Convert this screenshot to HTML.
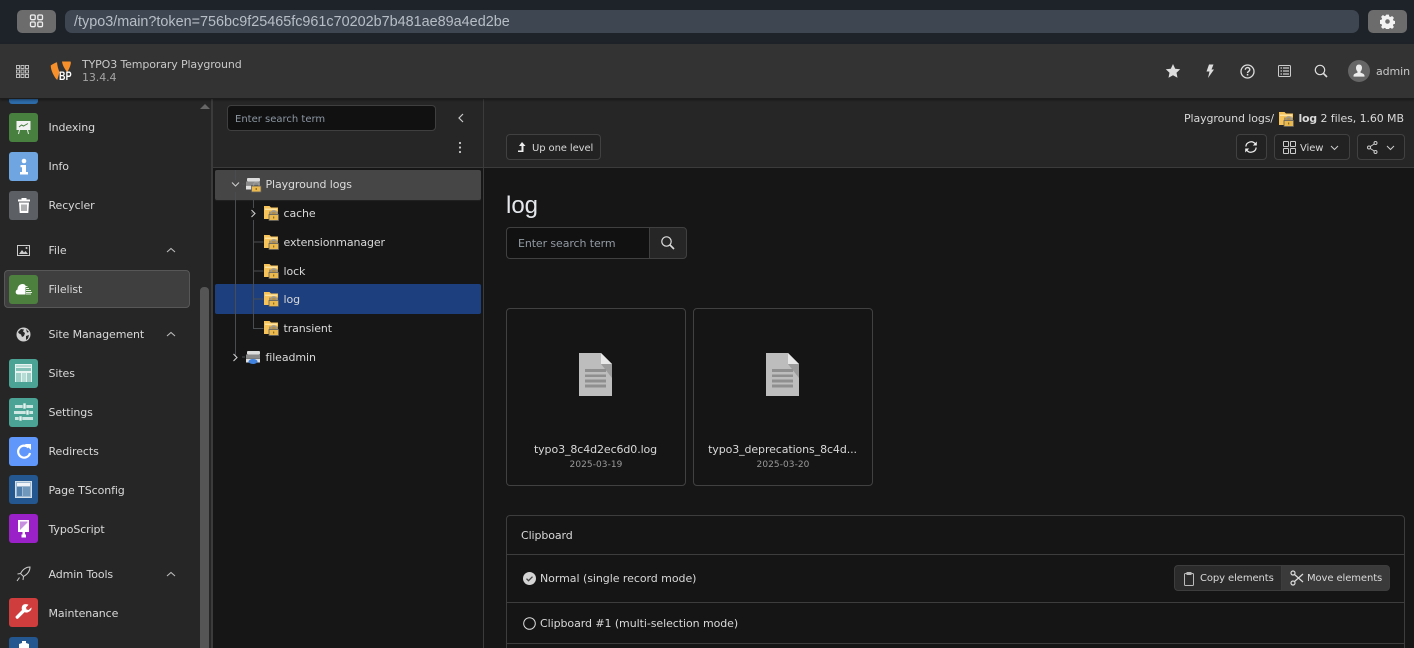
<!DOCTYPE html>
<html><head><meta charset="utf-8"><style>
*{box-sizing:border-box}
html,body{margin:0;padding:0;width:1414px;height:648px;overflow:hidden;background:#161616}
body{font-family:"DejaVu Sans",sans-serif;font-size:11px;color:#d9d9d9;position:relative}
.a{position:absolute}
.t{position:absolute;white-space:nowrap;line-height:14px;margin-top:1px;letter-spacing:-.1px}
svg{position:absolute;display:block}
.ic{position:absolute;left:9px;width:29px;height:29px;border-radius:3px}
.btn{position:absolute;border:1px solid #414141;border-radius:4px;height:26px;background:#222}
.s{left:48.500px}
.b{font-size:10px;margin-top:2px}
</style></head><body>
<!-- Browser bar -->
<div class="a" style="left:0;top:0;width:1414px;height:44px;background:#1e2329"></div>
<div class="a" style="left:17px;top:10px;width:39px;height:23px;background:#6c6c6c;border-radius:5px"></div>
<svg style="left:29px;top:14px" width="15" height="14" fill="none" stroke="#eee" stroke-width="1.300"><rect x="1.500" y="1" width="4.700" height="4.700" rx="1.200"/><rect x="8.800" y="1" width="4.700" height="4.700" rx="1.200"/><rect x="1.500" y="8" width="4.700" height="4.700" rx="1.200"/><rect x="8.800" y="8" width="4.700" height="4.700" rx="1.200"/></svg>
<div class="a" style="left:65px;top:10px;width:1294px;height:23px;background:#3e4651;border-radius:7px"></div>
<div class="t" style="left:74px;top:14px;margin:0;letter-spacing:0;font:14.400px/16px 'Liberation Sans',sans-serif;color:#b8bec6">/typo3/main?token=756bc9f25465fc961c70202b7b481ae89a4ed2be</div>
<div class="a" style="left:1368px;top:10px;width:39px;height:23px;background:#6c6c6c;border-radius:5px"></div>
<svg style="left:1380px;top:14px" width="15" height="15" viewBox="0 0 15 15"><path fill="#f2f2f2" fill-rule="evenodd" d="M6 0h3l.4 2 1.300.6 1.800-1.100 2 2-1.100 1.800.6 1.300 2 .4v3l-2 .4-.6 1.300 1.100 1.800-2 2-1.800-1.100-1.300.6-.4 2H6l-.4-2-1.300-.6-1.800 1.100-2-2 1.100-1.800-.6-1.300-2-.4V6l2-.4.6-1.300L.5 2.500l2-2 1.800 1.100L5.600 1z M7.500 5a2.500 2.500 0 1 0 0 5 2.500 2.500 0 0 0 0-5z" transform="translate(.6 .6) scale(.92)"/></svg>
<!-- Header -->
<div class="a" style="left:0;top:44px;width:1414px;height:55px;background:#333;border-bottom:1px solid #1c1c1c;box-shadow:0 1px 2px rgba(0,0,0,.4);z-index:3"></div>
<div style="position:absolute;left:0;top:0;z-index:4">
<svg style="left:16px;top:65px" width="13" height="13" fill="none" stroke="#bbb" stroke-width="1"><rect x=".5" y=".5" width="3" height="3"/><rect x="5" y=".5" width="3" height="3"/><rect x="9.500" y=".5" width="3" height="3"/><rect x=".5" y="5" width="3" height="3"/><rect x="5" y="5" width="3" height="3"/><rect x="9.500" y="5" width="3" height="3"/><rect x=".5" y="9.500" width="3" height="3"/><rect x="5" y="9.500" width="3" height="3"/><rect x="9.500" y="9.500" width="3" height="3"/></svg>
<svg style="left:50px;top:60px" width="22" height="24" viewBox="0 0 22 24"><path fill="#f7902a" d="M.7 5.500C2.500 4 5 2.800 7 2.200c.3 3.500 1.300 7 2.500 10-.6 2-1.300 5-2.300 7.800C4 17 .7 10 .7 5.500zM12 1.500h8.500c.6 1 .4 2-.2 4-.5 1.800-1.500 4-3 6.500C14.500 9 12.500 5 12 1.500z"/></svg>
<div class="t" style="left:59px;top:72px;margin:0;font:bold 11.500px/11px 'Liberation Sans',sans-serif;color:#fff;letter-spacing:.2px;transform:scaleX(.78);transform-origin:0 0">BP</div>
<div class="t" style="left:82px;top:57px;color:#c8c8c8;letter-spacing:-.13px">TYPO3 Temporary Playground</div>
<div class="t" style="left:82px;top:70px;color:#a5a5a5">13.4.4</div>
<svg style="left:1165px;top:63px" width="16" height="16" viewBox="0 0 16 16"><path fill="#ddd" d="M8 1l2.200 4.700 5 .6-3.700 3.500 1 5L8 12.300 3.500 14.800l1-5L.8 6.300l5-.6z"/></svg>
<svg style="left:1205px;top:64px" width="10" height="15" viewBox="0 0 10 15"><path fill="#ddd" d="M4 .5h4.500L6.500 5.500H9L3 14l1.500-6.500H1.500z"/></svg>
<svg style="left:1240px;top:64px" width="15" height="15" viewBox="0 0 15 15"><circle cx="7.500" cy="7.500" r="6.500" fill="none" stroke="#ddd" stroke-width="1.300"/><path fill="none" stroke="#ddd" stroke-width="1.400" d="M5.300 5.800c0-3 4.500-3 4.500-.2 0 1.700-2.300 1.700-2.300 3.500"/><rect x="6.800" y="10" width="1.500" height="1.500" fill="#ddd"/></svg>
<svg style="left:1278px;top:65px" width="13" height="12" viewBox="0 0 13 12"><rect x=".5" y=".5" width="12" height="11" rx="1" fill="none" stroke="#ccc"/><path stroke="#ccc" stroke-width="1.200" d="M2.500 3h1.500M5 3h6M2.500 6h1.500M5 6h6M2.500 9h1.500M5 9h6"/></svg>
<svg style="left:1314px;top:64px" width="15" height="15" viewBox="0 0 15 15"><circle cx="6" cy="6" r="4.700" fill="none" stroke="#ddd" stroke-width="1.200"/><path stroke="#ddd" stroke-width="1.600" d="M9.500 9.500l3.500 3.500"/></svg>
<svg style="left:1348px;top:60px" width="22" height="22" viewBox="0 0 22 22"><circle cx="11" cy="11" r="11" fill="#666"/><path fill="#ececec" d="M11 4.500c2 0 3 1.400 3 3.400 0 1.500-.7 3-1.500 3.700v1c1.500.7 3.800 1 4 3v1H5.500v-1c.2-2 2.500-2.300 4-3v-1C8.700 10.900 8 9.400 8 7.900c0-2 1-3.400 3-3.400z"/></svg>
<div class="t" style="left:1376px;top:64px;color:#c8c8c8">admin</div>
</div>
<!-- Sidebar -->
<div class="a" style="left:0;top:99px;width:212px;height:549px;background:#262626;border-right:1px solid #3b3b3b"></div>
<div class="a" style="left:212px;top:99px;width:1px;height:549px;background:#3b3b3b"></div>
<div class="ic" style="top:75px;background:#2c6aa8"></div>
<div class="a" style="left:200px;top:287px;width:9px;height:361px;background:#555;border-radius:4px 4px 0 0"></div>
<svg style="left:200px;top:103px" width="10" height="6"><path fill="#666" d="M0 6l5-5 5 5z"/></svg>
<div class="ic" style="top:113px;background:#47803f"></div>
<svg style="left:16px;top:120px" width="15" height="15" viewBox="0 0 15 15"><rect x=".5" y="1" width="14" height="9" fill="#f2f2f2"/><path stroke="#47803f" fill="none" d="M3 7l2.500-2 2 1L12 3.500"/><path stroke="#eee" d="M3.500 10l-1 4M11.500 10l1 4"/></svg>
<div class="t s" style="top:120px">Indexing</div>
<div class="ic" style="top:152px;background:#6fa5e0"></div>
<svg style="left:18px;top:158px" width="12" height="18" viewBox="0 0 12 18"><circle cx="6" cy="3" r="2.300" fill="#fff"/><path fill="#fff" d="M2.500 7H8v7h2v2.500H2V14h2V9.300H2.500z"/></svg>
<div class="t s" style="top:159px">Info</div>
<div class="ic" style="top:191px;background:#5c6064"></div>
<svg style="left:17px;top:197px" width="14" height="17" viewBox="0 0 14 17"><path fill="#fff" d="M1 2.500h3.500V1h5v1.500H13V4.500H1zM2 5.500h10L11.300 16H2.700z"/><path stroke="#5c6064" d="M5 7.500v6.500M7 7.500v6.500M9 7.500v6.500"/></svg>
<div class="t s" style="top:198px">Recycler</div>
<svg style="left:17px;top:245px" width="13" height="11" viewBox="0 0 13 11"><rect x=".5" y=".5" width="12" height="10" fill="none" stroke="#ccc"/><path fill="#ccc" d="M2 9l3-4 2 2.500L8.500 6 11 9z"/><circle cx="9.500" cy="3" r="1" fill="#ccc"/></svg>
<div class="t s" style="top:243px">File</div>
<svg style="left:166px;top:247px" width="10" height="7" fill="none" stroke="#bbb" stroke-width="1.100"><path d="M1 5l4-3.500L9 5"/></svg>
<div class="a" style="left:4px;top:270px;width:186px;height:38px;background:#3f3f3f;border:1px solid #575757;border-radius:4px"></div>
<div class="ic" style="top:275px;background:#4d7f3e"></div>
<svg style="left:15px;top:283px" width="18" height="13" viewBox="0 0 18 13"><path fill="#fff" d="M3 11.500C0 11.500 0 7 2.500 6.500c0-3 2-5.500 5-5.500 1.500 0 2.500.5 3 1.500v9z"/><path stroke="#e4efe0" d="M10.500 3.500h2M11 5.500h3M11 7.500h5M11 9.500h6M11 11h5"/></svg>
<div class="t s" style="top:282px">Filelist</div>
<svg style="left:16px;top:327px" width="15" height="15" viewBox="0 0 15 15"><circle cx="7.500" cy="7.500" r="7" fill="#cfcfcf"/><path fill="#262626" d="M2 5l3-3 3 .5-1 2 2 1.500-1 3-2 1-1-2.500-2-1zM10 9l3-1-1 3.500-2 1.500zM10 2l3 3-2 .5z"/></svg>
<div class="t s" style="top:327px">Site Management</div>
<svg style="left:166px;top:331px" width="10" height="7" fill="none" stroke="#bbb" stroke-width="1.100"><path d="M1 5l4-3.500L9 5"/></svg>
<div class="ic" style="top:359px;background:#4aa394"></div>
<svg style="left:15px;top:364px" width="17" height="19" viewBox="0 0 17 19"><rect width="17" height="18" fill="#e7f3f0"/><path fill="#4aa394" d="M1 1.500h15v1H1zM1 4h15v3H1z" opacity=".6"/><rect x="1" y="9" width="5" height="9" fill="#9dcfc6"/><rect x="7" y="9" width="4" height="9" fill="#b7dcd5"/><rect x="12" y="9" width="4" height="9" fill="#9dcfc6"/></svg>
<div class="t s" style="top:366px">Sites</div>
<div class="ic" style="top:398px;background:#4aa394"></div>
<svg style="left:14px;top:403px" width="19" height="20" viewBox="0 0 19 20"><path fill="#cfe7e2" d="M1 2h18v3H1zM0 8h19v3H0zM1 14h18v3H1z"/><rect x="9" y="0" width="3" height="6" fill="#e6f3f0" stroke="#4aa394" stroke-width=".6"/><rect x="12" y="7" width="3" height="5" fill="#e6f3f0" stroke="#4aa394" stroke-width=".6"/><rect x="5" y="13" width="3" height="5" fill="#e6f3f0" stroke="#4aa394" stroke-width=".6"/></svg>
<div class="t s" style="top:405px">Settings</div>
<div class="ic" style="top:437px;background:#5f97fb"></div>
<svg style="left:16px;top:443px" width="16" height="17" viewBox="0 0 16 17"><path fill="none" stroke="#fff" stroke-width="2.200" d="M12.500 4.500A6 6 0 1 0 14 10"/><path fill="#fff" d="M9 1h6v6z"/></svg>
<div class="t s" style="top:444px">Redirects</div>
<div class="ic" style="top:475px;background:#24568f"></div>
<svg style="left:15px;top:481px" width="17" height="17" viewBox="0 0 17 17"><rect x=".5" y=".5" width="16" height="16" fill="#9fb8d1" stroke="#d3e0ea"/><rect x="2" y="2" width="13" height="3" fill="#f0f4f8"/><rect x="2" y="6" width="5" height="9" fill="#4f7eac"/><rect x="8" y="6" width="7" height="9" fill="#7097bc"/></svg>
<div class="t s" style="top:483px">Page TSconfig</div>
<div class="ic" style="top:514px;background:#9a20c8"></div>
<svg style="left:17px;top:519px" width="13" height="19" viewBox="0 0 13 19"><path fill="#fff" d="M1 1h11v12H8v2.500h1v3H4.500v-3h1V13H1z"/><path fill="#c78fe0" d="M3 2.500h7.500v1L3 11z"/></svg>
<div class="t s" style="top:522px">TypoScript</div>
<svg style="left:16px;top:566px" width="15" height="16" viewBox="0 0 15 16" fill="none" stroke="#ccc"><path d="M14 1c-4 0-7 2-9.500 6.500l3 3C12 8 14 5 14 1zM4.500 7.500L1.500 8M7.500 10.500L7 14M3.500 11.500L1 15"/></svg>
<div class="t s" style="top:567px">Admin Tools</div>
<svg style="left:166px;top:571px" width="10" height="7" fill="none" stroke="#bbb" stroke-width="1.100"><path d="M1 5l4-3.500L9 5"/></svg>
<div class="ic" style="top:598px;background:#cf3d3d"></div>
<svg style="left:15px;top:604px" width="17" height="17" viewBox="0 0 17 17"><path fill="#fff" d="M16.500 3.500L13.500 6 11.500 5.500 11 3.500 13.500.8C11-.3 8-.2 7 2.500c-.5 1.500-.3 2.500 0 3.500L.8 12.300c-1 1 .8 3.500 2.300 2.300L9.500 8.300c1 .3 2.500.5 4-.3 2-1 3.300-2.500 3-4.500z"/></svg>
<div class="t s" style="top:606px">Maintenance</div>
<div class="ic" style="top:637px;background:#24568f"></div>
<svg style="left:17px;top:641px" width="14" height="7"><path fill="#fff" d="M5 0h4v2l3 1v4H2V3l3-1z"/></svg>
<!-- Tree panel -->
<div class="a" style="left:213px;top:99px;width:270px;height:69px;background:#262626;border-bottom:1px solid #3b3b3b"></div>
<div class="a" style="left:213px;top:168px;width:270px;height:480px;background:#161616"></div>
<div class="a" style="left:483px;top:99px;width:1px;height:549px;background:#3b3b3b"></div>
<div class="a" style="left:227px;top:105px;width:209px;height:26px;background:#111;border:1px solid #3f3f3f;border-radius:4px"></div>
<div class="t b" style="left:235px;top:111px;letter-spacing:0;color:#8c97a3">Enter search term</div>
<svg style="left:457px;top:113px" width="8" height="10" fill="none" stroke="#ccc" stroke-width="1.200"><path d="M6 1L2 5l4 4"/></svg>
<svg style="left:458px;top:141px" width="4" height="13"><circle cx="2" cy="2" r="1.100" fill="#ccc"/><circle cx="2" cy="6.500" r="1.100" fill="#ccc"/><circle cx="2" cy="11" r="1.100" fill="#ccc"/></svg>
<div class="a" style="left:215px;top:170px;width:266px;height:30px;background:#464646;border-radius:2px;box-shadow:0 1px 1px #222"></div>
<div class="a" style="left:215px;top:284px;width:266px;height:30px;background:#1d3f7d;border-radius:2px"></div>
<svg style="left:213px;top:168px;" width="60" height="200" fill="none" stroke="#4a4d50" stroke-width="1"><path d="M22.500 2v10M22.500 24v165M29 16h3M29 189h3M40.500 32v8M40.500 52v108.500h10M38 45h2.500M50.500 74h-10M50.500 103h-10M50.500 131h-10"/></svg>
<svg style="left:231px;top:181px" width="9" height="7" fill="none" stroke="#ccc" stroke-width="1.100"><path d="M1 1.500l3.500 3.500L8 1.500"/></svg>
<svg style="left:250px;top:209px" width="7" height="9" fill="none" stroke="#ccc" stroke-width="1.100"><path d="M1.500 1L5 4.500 1.500 8"/></svg>
<svg style="left:232px;top:353px" width="7" height="9" fill="none" stroke="#ccc" stroke-width="1.100"><path d="M1.500 1L5 4.500 1.500 8"/></svg>
<svg width="0" height="0" style="position:absolute"><defs>
<g id="lk"><path fill="none" stroke="#9a9a9a" stroke-width="1.400" d="M7 9V7.500c0-3.500 5.500-3.500 5.500 0V9"/><rect x="5" y="8.500" width="9.500" height="6" fill="#eab94f" stroke="#5e5e5e" stroke-width=".8"/><rect x="9.200" y="10.500" width="1" height="2" fill="#7a5a10"/></g>
<g id="fo"><path fill="#f5c35a" d="M0 0h5.500L7 1.500h7V13H0z"/><path fill="#fde2a0" d="M1 2.500h12V4H1z"/><path fill="#6b5a36" d="M5 5.500h9V9H5z" opacity=".5"/><use href="#lk"/></g>
<g id="dr"><rect x="1" y="1" width="13" height="3.500" rx="1" fill="#dcdcdc"/><rect x="0" y="4.500" width="14" height="3.500" fill="#8a8a8a"/><rect x="0" y="8.500" width="14" height="4" fill="#e0e0e0"/></g>
</defs></svg>
<svg style="left:246px;top:177px" width="16" height="16"><use href="#dr"/><use href="#lk" transform="translate(.5 .5)"/></svg>
<div class="t" style="left:265.500px;top:177px;color:#dcdcdc">Playground logs</div>
<svg style="left:264px;top:206px" width="15" height="15"><use href="#fo"/></svg>
<div class="t" style="left:283.500px;top:206px">cache</div>
<svg style="left:264px;top:235px" width="15" height="15"><use href="#fo"/></svg>
<div class="t" style="left:283.500px;top:235px">extensionmanager</div>
<svg style="left:264px;top:264px" width="15" height="15"><use href="#fo"/></svg>
<div class="t" style="left:283.500px;top:264px">lock</div>
<svg style="left:264px;top:292px" width="15" height="15"><use href="#fo"/></svg>
<div class="t" style="left:283.500px;top:292px">log</div>
<svg style="left:264px;top:321px" width="15" height="15"><use href="#fo"/></svg>
<div class="t" style="left:283.500px;top:321px">transient</div>
<svg style="left:246px;top:350px" width="15" height="15"><use href="#dr"/><ellipse cx="7" cy="11.500" rx="4.500" ry="2.500" fill="#3f82df"/></svg>
<div class="t" style="left:265.500px;top:350px">fileadmin</div>
<!-- Doc header -->
<div class="a" style="left:484px;top:99px;width:930px;height:69px;background:#262626;border-bottom:1px solid #3b3b3b"></div>
<div class="t" style="left:1184px;top:111px">Playground logs/</div>
<svg style="left:1279px;top:112px" width="15" height="15"><use href="#fo"/></svg>
<div class="t" style="left:1298.500px;top:111px;font-weight:bold;letter-spacing:-.3px">log</div>
<div class="t" style="left:1320.500px;top:111px">2 files, 1.60 MB</div>
<div class="btn" style="left:506px;top:134px;width:95px"></div>
<svg style="left:516px;top:141px" width="11" height="12" viewBox="0 0 11 12"><path fill="#eee" d="M5.500 1L9 5H7v6H1.500V9.500H5V5H2.500z" transform="translate(.5 0)"/></svg>
<div class="t b" style="left:532px;top:140px">Up one level</div>
<div class="btn" style="left:1236px;top:134px;width:31px"></div>
<svg style="left:1244px;top:140px" width="14" height="14" viewBox="0 0 14 14" fill="none" stroke="#eee" stroke-width="1.200"><path d="M1.800 6.500a5.300 5.300 0 0 1 9.400-2.700M12.200 7.500a5.300 5.300 0 0 1-9.400 2.700"/><path fill="#eee" stroke="none" d="M12.800 1.500v4H8.800zM1.200 12.500v-4h4z"/></svg>
<div class="btn" style="left:1274px;top:134px;width:76px"></div>
<svg style="left:1283px;top:141px" width="13" height="13" fill="none" stroke="#ccc"><rect x=".5" y=".5" width="5" height="5" rx=".5"/><rect x="7.500" y=".5" width="5" height="5" rx=".5"/><rect x=".5" y="7.500" width="5" height="5" rx=".5"/><rect x="7.500" y="7.500" width="5" height="5" rx=".5"/></svg>
<div class="t b" style="left:1300px;top:140px">View</div>
<svg style="left:1330px;top:145px" width="9" height="6" fill="none" stroke="#ccc"><path d="M1 1l3.500 3.500L8 1"/></svg>
<div class="btn" style="left:1357px;top:134px;width:48px"></div>
<svg style="left:1367px;top:141px" width="11" height="13" fill="none" stroke="#ccc"><circle cx="2" cy="6.500" r="1.500"/><circle cx="8.500" cy="2" r="1.500"/><circle cx="8.500" cy="11" r="1.500"/><path d="M3.300 5.500L7.200 3M3.300 7.500l3.900 2.500"/></svg>
<svg style="left:1386px;top:145px" width="9" height="6" fill="none" stroke="#ccc"><path d="M1 1l3.500 3.500L8 1"/></svg>
<!-- Main -->
<div class="t" style="left:506px;top:191px;margin:0;letter-spacing:0;font:24px/29px 'Liberation Sans',sans-serif;color:#e4e8ec">log</div>
<div class="a" style="left:506px;top:227px;width:144px;height:32px;background:#111;border:1px solid #404040;border-radius:4px 0 0 4px"></div>
<div class="t" style="left:518px;top:236px;color:#929aa3">Enter search term</div>
<div class="a" style="left:649px;top:227px;width:38px;height:32px;background:#262626;border:1px solid #404040;border-radius:0 4px 4px 0"></div>
<svg style="left:661px;top:236px" width="14" height="14" viewBox="0 0 14 14"><circle cx="5.500" cy="5.500" r="4.700" fill="none" stroke="#ddd" stroke-width="1.200"/><path stroke="#ddd" stroke-width="1.600" d="M9 9l4 4"/></svg>
<!-- Cards -->
<div class="a" style="left:506px;top:308px;width:180px;height:178px;background:#151515;border:1px solid #414141;border-radius:4px"></div>
<div class="a" style="left:693px;top:308px;width:180px;height:178px;background:#151515;border:1px solid #414141;border-radius:4px"></div>
<svg style="left:579px;top:353px" width="33" height="43" viewBox="0 0 33 43"><path fill="#bdbdbd" d="M0 0h22l11 11v32H0z"/><path fill="#e8e8e8" d="M22 0l11 11H22z"/><path fill="#9c9c9c" d="M22 11h11v14z"/><path fill="#8f8f8f" d="M6 12h21v3H6zM6 17.500h21v2.500H6zM6 22.500h21v3H6zM6 27.500h21v3H6z" transform="translate(0 4)"/></svg>
<svg style="left:766px;top:353px" width="33" height="43" viewBox="0 0 33 43"><path fill="#bdbdbd" d="M0 0h22l11 11v32H0z"/><path fill="#e8e8e8" d="M22 0l11 11H22z"/><path fill="#9c9c9c" d="M22 11h11v14z"/><path fill="#8f8f8f" d="M6 12h21v3H6zM6 17.500h21v2.500H6zM6 22.500h21v3H6zM6 27.500h21v3H6z" transform="translate(0 4)"/></svg>
<div class="t" style="left:505.500px;width:180px;top:442px;text-align:center">typo3_8c4d2ec6d0.log</div>
<div class="t" style="left:506px;width:180px;top:457px;text-align:center;font-size:9px;letter-spacing:.06px;color:#9a9a9a">2025-03-19</div>
<div class="t" style="left:692.500px;width:180px;top:442px;text-align:center">typo3_deprecations_8c4d...</div>
<div class="t" style="left:693px;width:180px;top:457px;text-align:center;font-size:9px;letter-spacing:.06px;color:#9a9a9a">2025-03-20</div>
<!-- Clipboard -->
<div class="a" style="left:506px;top:515px;width:899px;height:140px;background:#151515;border:1px solid #3d3d3d;border-radius:4px"></div>
<div class="a" style="left:507px;top:554px;width:897px;height:1px;background:#3d3d3d"></div>
<div class="a" style="left:507px;top:602px;width:897px;height:1px;background:#3d3d3d"></div>
<div class="a" style="left:507px;top:643px;width:897px;height:1px;background:#3d3d3d"></div>
<div class="t" style="left:521px;top:528px">Clipboard</div>
<svg style="left:523px;top:572px" width="13" height="13"><circle cx="6.500" cy="6.500" r="6.500" fill="#d4d4d4"/><path fill="none" stroke="#444" stroke-width="1.300" d="M3.500 6.700l2 2 4-4"/></svg>
<div class="t" style="left:540px;top:571px;letter-spacing:-.05px">Normal (single record mode)</div>
<svg style="left:523px;top:617px" width="13" height="13" fill="none" stroke="#ddd"><circle cx="6.500" cy="6.500" r="5.800"/></svg>
<div class="t" style="left:540px;top:616px;letter-spacing:-.07px">Clipboard #1 (multi-selection mode)</div>
<div class="a" style="left:1174px;top:565px;width:108px;height:26px;background:#2b2b2b;border:1px solid #3d3d3d;border-radius:4px 0 0 4px"></div>
<div class="a" style="left:1281px;top:565px;width:109px;height:26px;background:#3a3a3a;border:1px solid #3d3d3d;border-radius:0 4px 4px 0"></div>
<svg style="left:1184px;top:572px" width="11" height="14" fill="none" stroke="#bbb"><rect x=".5" y="1.500" width="9" height="12" rx="1"/><rect x="3" y=".5" width="4" height="2" fill="#bbb"/></svg>
<div class="t b" style="left:1200px;top:570px">Copy elements</div>
<svg style="left:1290px;top:570px" width="14" height="16" viewBox="0 0 14 16" fill="none" stroke="#ddd" stroke-width="1.200"><circle cx="3" cy="3" r="2"/><circle cx="3" cy="13" r="2"/><path d="M4.500 4.500L13 12M4.500 11.500L13 4"/></svg>
<div class="t b" style="left:1307px;top:570px">Move elements</div>
</body></html>
